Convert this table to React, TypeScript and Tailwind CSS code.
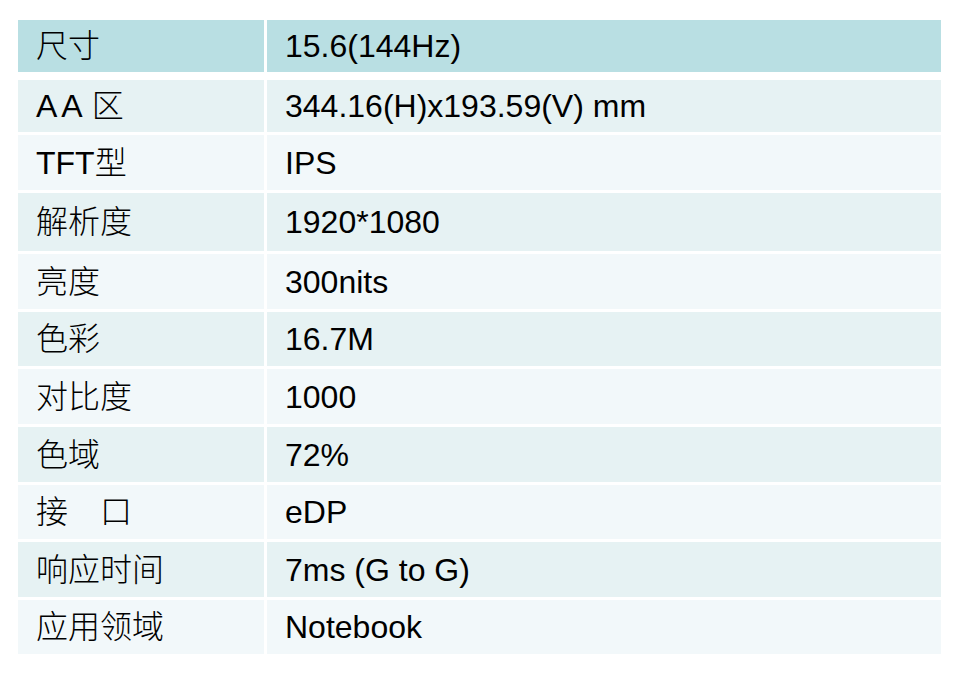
import React from 'react';

interface SpecRow {
  label: React.ReactNode;
  value: string;
  h: string;
  bg: string;
}

const rows: SpecRow[] = [
  { label: <><span className="tracking-[4px]">AA</span><span className="ml-[5px]">区</span></>, value: '344.16(H)x193.59(V) mm', h: 'h-[52px]', bg: 'bg-[#e6f2f3]' },
  { label: 'TFT型', value: 'IPS', h: 'h-[55px]', bg: 'bg-[#f2f8fa]' },
  { label: '解析度', value: '1920*1080', h: 'h-[58px]', bg: 'bg-[#e6f2f3]' },
  { label: '亮度', value: '300nits', h: 'h-[55px]', bg: 'bg-[#f2f8fa]' },
  { label: '色彩', value: '16.7M', h: 'h-[54px]', bg: 'bg-[#e6f2f3]' },
  { label: '对比度', value: '1000', h: 'h-[55px]', bg: 'bg-[#f2f8fa]' },
  { label: '色域', value: '72%', h: 'h-[55px]', bg: 'bg-[#e6f2f3]' },
  { label: '接\u3000口', value: 'eDP', h: 'h-[54px]', bg: 'bg-[#f2f8fa]' },
  { label: '响应时间', value: '7ms (G to G)', h: 'h-[55px]', bg: 'bg-[#e6f2f3]' },
  { label: '应用领域', value: 'Notebook', h: 'h-[54px]', bg: 'bg-[#f2f8fa]' },
];

const font = { fontFamily: '"Liberation Sans", "Noto Sans CJK SC", sans-serif' };

export default function App() {
  return (
    <div className="w-[966px] h-[684px] bg-white pt-[20px] pl-[18px] text-[32px] text-black" style={font}>
      <div className="w-[923px] flex flex-col">
        <div className="flex h-[52px] gap-[3px] mb-[8px]">
          <div className="w-[246px] bg-[#b9dfe3] flex items-center pl-[18px] font-light">尺寸</div>
          <div className="flex-1 bg-[#b9dfe3] flex items-center pl-[18px]">15.6(144Hz)</div>
        </div>
        <div className="flex flex-col gap-[3px]">
          {rows.map((r, i) => (
            <div key={i} className={`flex gap-[3px] ${r.h}`}>
              <div className={`w-[246px] ${r.bg} flex items-center pl-[18px] font-light whitespace-pre`}>{r.label}</div>
              <div className={`flex-1 ${r.bg} flex items-center pl-[18px]`}>{r.value}</div>
            </div>
          ))}
        </div>
      </div>
    </div>
  );
}
